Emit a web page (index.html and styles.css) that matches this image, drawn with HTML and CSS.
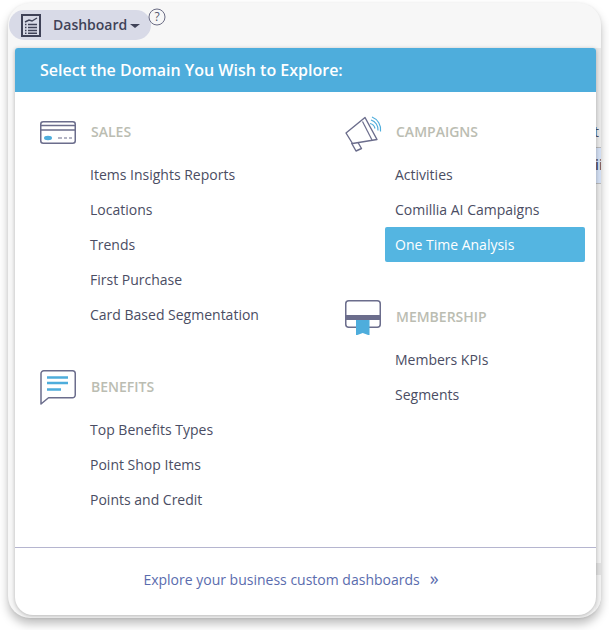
FILE: index.html
```html
<!DOCTYPE html>
<html lang="en">
<head>
<meta charset="utf-8">
<title>Dashboard</title>
<link rel="stylesheet" href="styles.css">
</head>
<body>
<div class="frame">
  <div class="backdrop">
    <div class="strip">
      <div class="strip-upper">
        <span class="strip-t">t</span>
        <div class="strip-band"><span>ii</span></div>
      </div>
      <div class="strip-block"></div>
    </div>
  </div>
  <div class="topbar">
    <div class="pill">
      <svg class="doc-icon" width="20" height="23" viewBox="0 0 20 23">
        <rect x="1" y="1" width="18" height="21" fill="none" stroke="#3f4257" stroke-width="2"/>
        <path d="M4 8 L8 6 L11 7 L16 4" fill="none" stroke="#3f4257" stroke-width="1.4"/>
        <path d="M4 10.5H5.5M7 10.5H16M4 13.5H5.5M7 13.5H16M4 16.5H5.5M7 16.5H16M4 19.3H5.5M7 19.3H16" stroke="#3f4257" stroke-width="1.6"/>
      </svg>
      <span class="pill-label">Dashboard</span>
      <span class="caret"></span>
    </div>
    <svg class="help-icon" width="18" height="18" viewBox="0 0 18 18">
      <circle cx="9" cy="9" r="8" fill="none" stroke="#6a6c84" stroke-width="1"/>
      <text x="9" y="13.2" text-anchor="middle" class="help-mark">?</text>
    </svg>
  </div>
  <div class="menu">
    <div class="menu-header">Select the Domain You Wish to Explore:</div>
    <div class="menu-body">
      <div class="col">
        <section class="group">
          <div class="group-head">
            <svg class="group-icon" width="36" height="36" viewBox="0 -4 36 36">
              <rect x="0.75" y="3.75" width="34.5" height="21.5" rx="2.5" fill="none" stroke="#6b6d8c" stroke-width="1.5"/>
              <path d="M1 7.5H35M1 12H35" stroke="#6b6d8c" stroke-width="1.3"/>
              <ellipse cx="8" cy="20" rx="4" ry="2.2" fill="#4eaddc"/>
              <path d="M18 20H22M24 20H27M29 20H32" stroke="#6b6d8c" stroke-width="1.2"/>
            </svg>
            <h3>SALES</h3>
          </div>
          <ul class="links">
            <li><a>Items Insights Reports</a></li>
            <li><a>Locations</a></li>
            <li><a>Trends</a></li>
            <li><a>First Purchase</a></li>
            <li><a>Card Based Segmentation</a></li>
          </ul>
        </section>
        <section class="group">
          <div class="group-head">
            <svg class="group-icon" width="36" height="36" viewBox="0 0 36 36">
              <path d="M4 1.75H32.5A2.75 2.75 0 0 1 35.25 4.5V26A2.75 2.75 0 0 1 32.5 28.75H8.5L1 35V4.5A2.75 2.75 0 0 1 4 1.75Z" fill="none" stroke="#6b6d8c" stroke-width="1.5" stroke-linejoin="round"/>
              <path d="M7 8.5H28M7 14H28M7 20.5H21" stroke="#4eaddc" stroke-width="2.4"/>
            </svg>
            <h3>BENEFITS</h3>
          </div>
          <ul class="links">
            <li><a>Top Benefits Types</a></li>
            <li><a>Point Shop Items</a></li>
            <li><a>Points and Credit</a></li>
          </ul>
        </section>
      </div>
      <div class="col">
        <section class="group">
          <div class="group-head">
            <svg class="group-icon group-icon-wide" width="40" height="40" viewBox="0 -2 40 40">
              <path d="M1 19 L20 3.5 L32 25.5 L7.5 29.5 Z" fill="none" stroke="#6b6d8c" stroke-width="1.4" stroke-linejoin="round"/>
              <path d="M17.5 7.5 L27 26" fill="none" stroke="#6b6d8c" stroke-width="1.2"/>
              <path d="M6.5 29 L11 37 L16.5 34.5 L13 28.5" fill="none" stroke="#6b6d8c" stroke-width="1.4" stroke-linejoin="round"/>
              <path d="M25 9.5A6.5 6.5 0 0 1 30 14.5M26 6A10 10 0 0 1 33 16.5M27 3A13.5 13.5 0 0 1 35.5 17.5" fill="none" stroke="#4eaddc" stroke-width="1.2"/>
            </svg>
            <h3>CAMPAIGNS</h3>
          </div>
          <ul class="links">
            <li><a>Activities</a></li>
            <li><a>Comillia AI Campaigns</a></li>
            <li><a class="active">One Time Analysis</a></li>
          </ul>
        </section>
        <section class="group">
          <div class="group-head">
            <svg class="group-icon" width="36" height="36" viewBox="0 -1 36 36">
              <rect x="0.75" y="0.75" width="34.5" height="26.5" rx="3" fill="none" stroke="#6b6d8c" stroke-width="1.5"/>
              <rect x="0.75" y="15" width="34.5" height="5" fill="#6b6d8c"/>
              <path d="M11 20H24.5V35.5L17.75 33L11 35.5Z" fill="#4eaddc"/>
            </svg>
            <h3>MEMBERSHIP</h3>
          </div>
          <ul class="links">
            <li><a>Members KPIs</a></li>
            <li><a>Segments</a></li>
          </ul>
        </section>
      </div>
    </div>
    <div class="menu-footer">
      <a class="explore">Explore your business custom dashboards<span class="explore-arrows">»</span></a>
    </div>
  </div>
</div>
</body>
</html>
```
FILE: styles.css
```css
* { box-sizing: border-box; }

html, body {
  margin: 0;
  padding: 0;
  background: #ffffff;
}

body {
  width: 609px;
  height: 630px;
  overflow: hidden;
  font-family: "Open Sans", "Liberation Sans", sans-serif;
  font-size: 14px;
  color: #4a4d63;
}

.frame {
  position: relative;
  display: flex;
  flex-direction: column;
  width: 593px;
  height: 615px;
  margin: 3px 0 0 8px;
  padding: 7px 5px 3px 1px;
  background: #f7f7f7;
  border-radius: 22px;
  box-shadow: 0 6px 10px rgba(0, 0, 0, 0.25), 0 0 3px rgba(0, 0, 0, 0.06);
  overflow: visible;
}

.backdrop {
  position: absolute;
  inset: 0;
  border-radius: 22px;
  overflow: hidden;
}

.strip {
  position: absolute;
  top: 45px;
  right: 0;
  bottom: 0;
  width: 6px;
  background: #f1f1f1;
  overflow: hidden;
}

.strip-upper {
  height: 162px;
  background: #e8e8e8;
}

.strip-t {
  display: block;
  height: 99px;
  padding-top: 74px;
  margin-left: -1px;
  font-size: 14px;
  line-height: 20px;
  color: #4a4d63;
}

.strip-band {
  height: 37px;
  padding-top: 7px;
  background: #d2def2;
  border-top: 1px solid #b8b8b8;
  border-bottom: 1px solid #b8b8b8;
  font-size: 14px;
  line-height: 20px;
  font-weight: 600;
  color: #4a4d63;
}

.strip-block {
  height: 12px;
  margin-top: 353px;
  background: #dfdfdf;
}

.topbar {
  position: relative;
  display: flex;
  align-items: flex-start;
  height: 38px;
  flex: none;
}

.pill {
  display: flex;
  align-items: center;
  width: 142px;
  height: 30px;
  padding-left: 12px;
  background: #d8dae7;
  border-radius: 15px;
}

.doc-icon { flex: none; }

.pill-label {
  margin-left: 12px;
  padding-bottom: 2px;
  font-size: 14px;
  font-weight: 600;
  color: #3f4257;
}

.caret {
  width: 0;
  height: 0;
  margin: 1px 0 0 3px;
  border-left: 5px solid transparent;
  border-right: 5px solid transparent;
  border-top: 4px solid #3f4257;
}

.help-icon {
  flex: none;
  margin: -2px 0 0 -3px;
}

.help-mark {
  font-family: "Open Sans", sans-serif;
  font-size: 12px;
  fill: #55586f;
}

.menu {
  position: relative;
  display: flex;
  flex-direction: column;
  flex: 1;
  margin-left: 6px;
  background: #ffffff;
  border-radius: 3px 3px 18px 18px;
  box-shadow: 0 1px 4px rgba(0, 0, 0, 0.28);
}

.menu-header {
  height: 44px;
  padding-left: 25px;
  line-height: 44px;
  background: #4eaddc;
  border-radius: 3px 3px 0 0;
  font-size: 16px;
  font-weight: 600;
  color: #ffffff;
}

.menu-body {
  display: grid;
  grid-template-columns: 305px 1fr;
  flex: 1;
  padding: 20px 0 0 25px;
}

.col {
  display: flex;
  flex-direction: column;
  gap: 35px;
}

.group-head {
  display: flex;
  align-items: center;
  height: 40px;
  margin-bottom: 5px;
}

.group-icon {
  flex: none;
  margin-right: 15px;
}

.group-icon-wide {
  margin-right: 11px;
}

.group-head h3 {
  margin: 0;
  padding-bottom: 2px;
  font-size: 14px;
  font-weight: 600;
  color: #bbbdb2;
}

.links {
  margin: 0;
  padding: 0 0 0 40px;
  list-style: none;
}

.links a {
  display: block;
  width: 200px;
  height: 35px;
  padding-left: 10px;
  line-height: 35px;
  border-radius: 2px;
  white-space: nowrap;
  color: #4a4d63;
}

.links a.active {
  background: #54b5e1;
  color: #ffffff;
}

.menu-footer {
  display: flex;
  align-items: center;
  justify-content: center;
  height: 68px;
  padding: 0 29px 4px 0;
  border-top: 1px solid #b5b5cf;
}

.explore {
  color: #5a6cae;
  white-space: nowrap;
}

.explore-arrows {
  margin-left: 10px;
  font-size: 18px;
  line-height: 14px;
}
```
